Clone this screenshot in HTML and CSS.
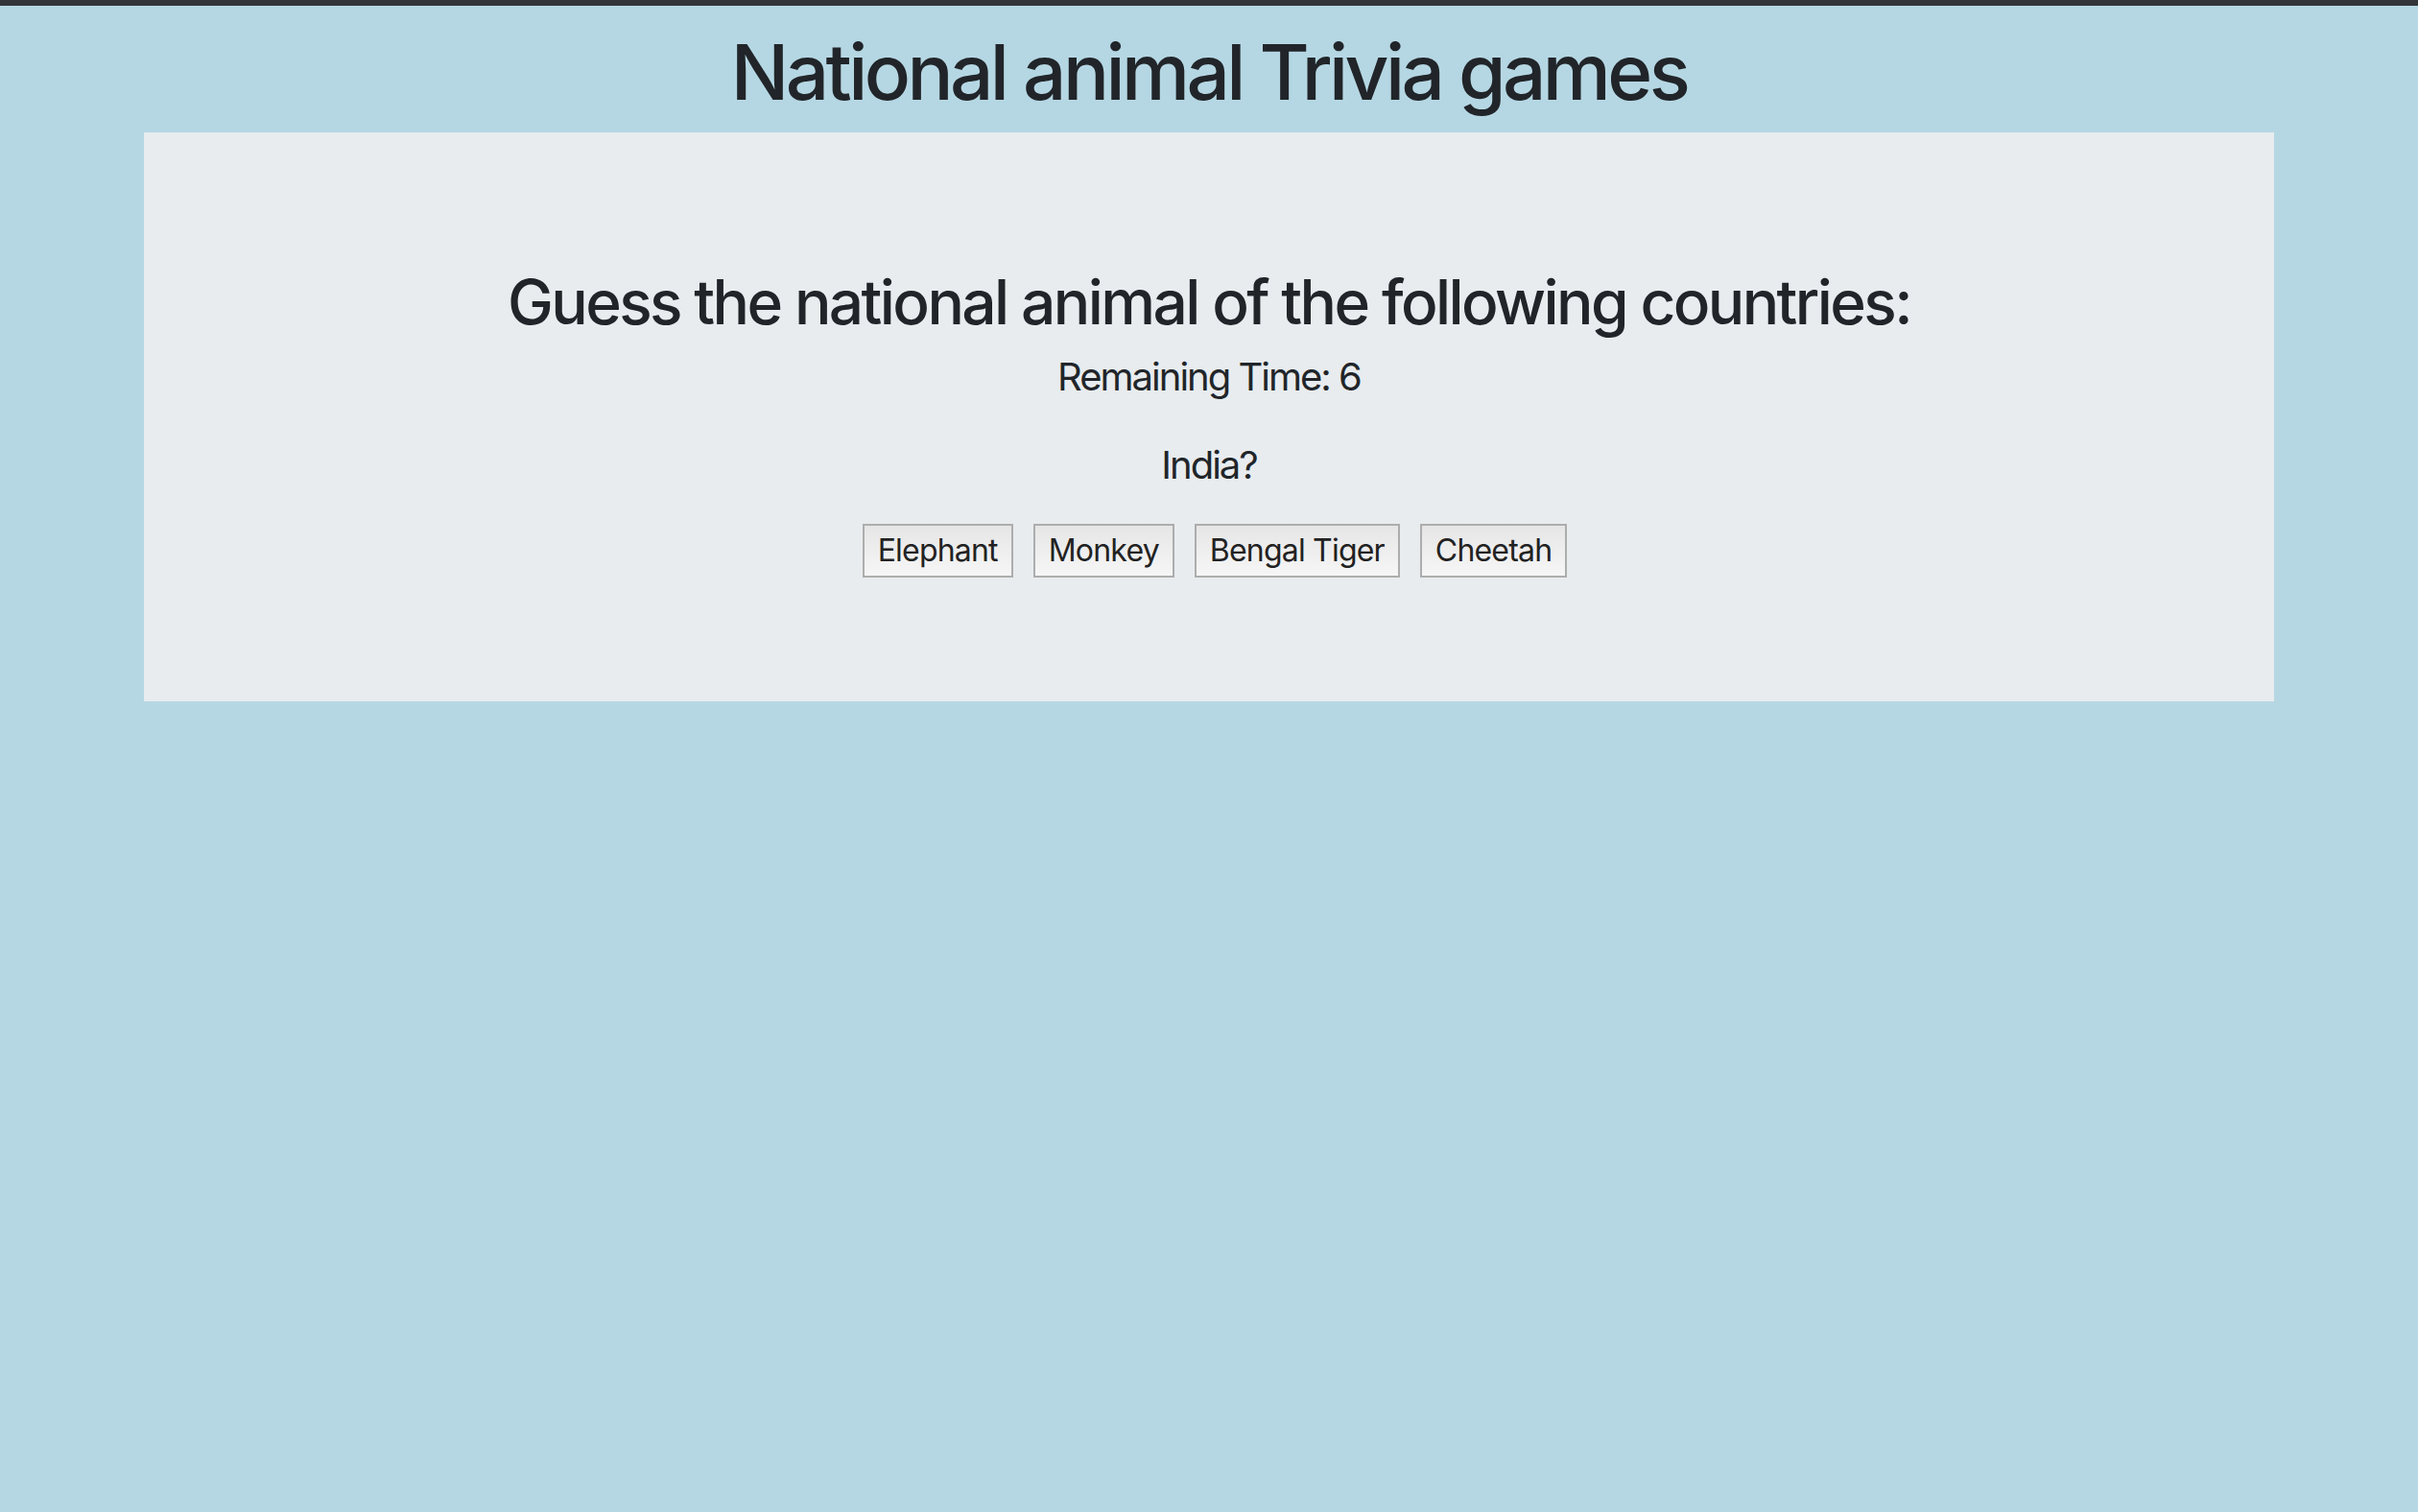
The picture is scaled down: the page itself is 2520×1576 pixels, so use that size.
FILE: index.html
```html
<!DOCTYPE html>
<html lang="en">
<head>
<meta charset="utf-8">
<title>National animal Trivia games</title>
<link rel="stylesheet" href="styles.css">
</head>
<body>
<div class="topbar"></div>
<h1 class="title">National animal Trivia games</h1>
<main class="card">
  <h2 class="prompt">Guess the national animal of the following countries:</h2>
  <p class="timer">Remaining Time: 6</p>
  <p class="question">India?</p>
  <div class="options">
    <button class="option">Elephant</button>
    <button class="option">Monkey</button>
    <button class="option">Bengal Tiger</button>
    <button class="option">Cheetah</button>
  </div>
</main>
</body>
</html>
```
FILE: styles.css
```css
html, body {
  margin: 0;
  padding: 0;
}
body {
  background: #b5d7e3;
  color: #212529;
  font-family: Inter, "Noto Sans", "Liberation Sans", sans-serif;
  min-height: 1576px;
}
.topbar {
  height: 6px;
  background: #32363a;
}
.title {
  margin: 21px 0 15px;
  font-size: 80px;
  font-weight: 500;
  line-height: 1.2;
  text-align: center;
  letter-spacing: -3.6px;
}
.card {
  margin: 0 150px;
  background: #e8ecef;
  padding: 139px 0 129px;
  text-align: center;
}
.prompt {
  margin: 0 0 9px;
  font-size: 64px;
  font-weight: 500;
  line-height: 1.2;
  letter-spacing: -2.6px;
}
.timer, .question {
  margin: 0;
  font-size: 40px;
  font-weight: 400;
  line-height: 1.5;
  letter-spacing: -2px;
}
.question {
  margin-top: 32px;
}
.options {
  margin-top: 31px;
  padding-left: 12px;
  display: flex;
  justify-content: center;
  gap: 21px;
}
.option {
  font-family: Inter, "Noto Sans", "Liberation Sans", sans-serif;
  font-size: 32px;
  line-height: 1.2;
  letter-spacing: -0.8px;
  color: #222;
  padding: 7px 14px;
  border: 2px solid #adadad;
  border-radius: 0;
  background: linear-gradient(#e6e6e6, #f6f6f6);
}
```
